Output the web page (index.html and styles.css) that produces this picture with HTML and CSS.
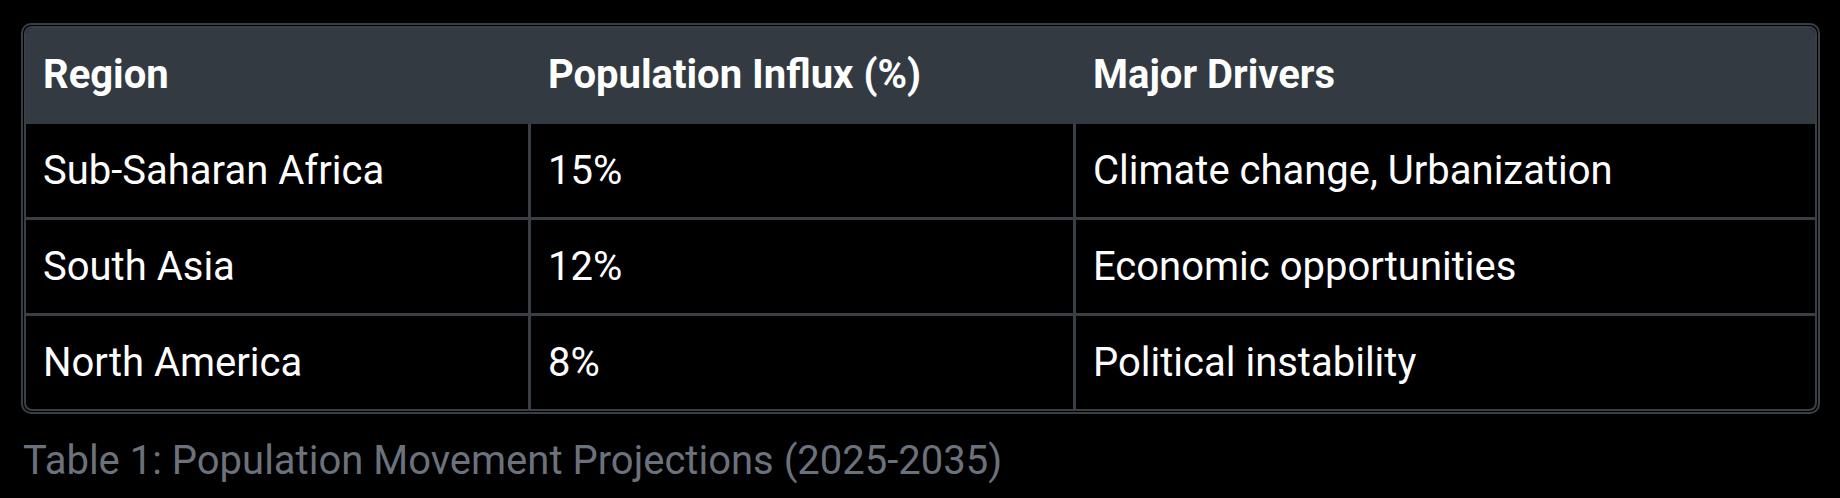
FILE: index.html
```html
<!DOCTYPE html>
<html lang="en">
<head>
<meta charset="utf-8">
<title>Population Movement Projections</title>
<link rel="stylesheet" href="styles.css">
</head>
<body>
<figure class="figure">
  <div class="table-wrap">
    <table class="data-table">
      <colgroup>
        <col class="col-region">
        <col class="col-influx">
        <col class="col-drivers">
      </colgroup>
      <thead>
        <tr>
          <th>Region</th>
          <th>Population Influx (%)</th>
          <th>Major Drivers</th>
        </tr>
      </thead>
      <tbody>
        <tr>
          <td>Sub-Saharan Africa</td>
          <td>15%</td>
          <td>Climate change, Urbanization</td>
        </tr>
        <tr>
          <td>South Asia</td>
          <td>12%</td>
          <td>Economic opportunities</td>
        </tr>
        <tr>
          <td>North America</td>
          <td>8%</td>
          <td>Political instability</td>
        </tr>
      </tbody>
    </table>
  </div>
  <figcaption class="caption">Table 1: Population Movement Projections (2025-2035)</figcaption>
</figure>
</body>
</html>
```

FILE: styles.css
```css
html, body {
  margin: 0;
  padding: 0;
  background: #000;
}

body {
  font-family: Roboto, "Liberation Sans", Arial, sans-serif;
  color: #fff;
}

.figure {
  margin: 0;
  padding: 23px 20px 0 21px;
}

.table-wrap {
  border: 2px solid #3a3f46;
  border-radius: 10px;
  padding: 1px;
}

.data-table {
  width: 100%;
  table-layout: fixed;
  border-collapse: separate;
  border-spacing: 0;
  border: 2px solid #3a3f46;
  border-radius: 8px;
  overflow: hidden;
}

.col-region { width: 505px; }
.col-influx { width: 545px; }
.col-drivers { width: auto; }

.data-table th,
.data-table td {
  text-align: left;
  padding: 0 17px;
  height: 93px;
  font-size: 40px;
  line-height: 1;
  border-right: 3px solid #3a3f46;
  border-bottom: 3px solid #3a3f46;
  vertical-align: middle;
}

.data-table th {
  background: #343a42;
  font-weight: 700;
  border-right-color: #343a42;
  border-bottom-color: #343a42;
}

.data-table tr > :last-child {
  border-right: 0;
}

.data-table tbody tr:last-child td {
  border-bottom: 0;
}

.caption {
  margin-top: 23px;
  padding-left: 2px;
  font-size: 40px;
  line-height: 1.2;
  color: #6b727b;
}
```
